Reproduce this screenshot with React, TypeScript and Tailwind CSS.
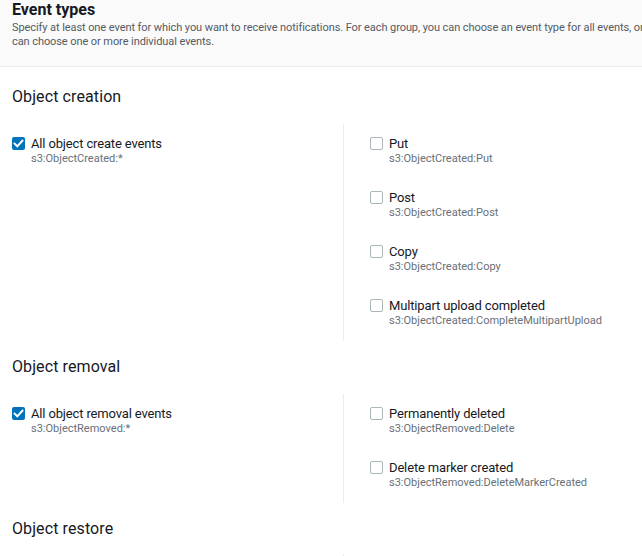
import React from 'react';

type EventOption = { label: string; code: string; checked?: boolean };

type Group = {
  title: string;
  all: EventOption;
  items: EventOption[];
};

const groups: Group[] = [
  {
    title: 'Object creation',
    all: { label: 'All object create events', code: 's3:ObjectCreated:*', checked: true },
    items: [
      { label: 'Put', code: 's3:ObjectCreated:Put' },
      { label: 'Post', code: 's3:ObjectCreated:Post' },
      { label: 'Copy', code: 's3:ObjectCreated:Copy' },
      { label: 'Multipart upload completed', code: 's3:ObjectCreated:CompleteMultipartUpload' },
    ],
  },
  {
    title: 'Object removal',
    all: { label: 'All object removal events', code: 's3:ObjectRemoved:*', checked: true },
    items: [
      { label: 'Permanently deleted', code: 's3:ObjectRemoved:Delete' },
      { label: 'Delete marker created', code: 's3:ObjectRemoved:DeleteMarkerCreated' },
    ],
  },
];

const Checkbox = ({ checked }: { checked?: boolean }) =>
  checked ? (
    <span className="mt-[1px] flex h-[13px] w-[13px] shrink-0 items-center justify-center rounded-[2px] bg-[#0073bb]">
      <svg viewBox="0 0 13 13" className="h-[13px] w-[13px]" fill="none">
        <path d="M2.6 6.6l2.7 2.7 5.1-5.6" stroke="#fff" strokeWidth={2} strokeLinecap="square" />
      </svg>
    </span>
  ) : (
    <span className="mt-[1px] h-[13px] w-[13px] shrink-0 rounded-[2px] border border-[#aab7b8] bg-white" />
  );

const EventRow = ({ option }: { option: EventOption }) => (
  <label className="flex gap-[6px]">
    <Checkbox checked={option.checked} />
    <div className="flex flex-col">
      <span className="text-[13px] leading-[16px] tracking-[-0.15px] text-[#16191f]">{option.label}</span>
      <span className="text-[11px] leading-[14px] text-[#687078]">{option.code}</span>
    </div>
  </label>
);

const EventGroup = ({ group }: { group: Group }) => (
  <section>
    <h3 className="mt-4 mb-[17px] text-[16px] leading-[20px] tracking-[0.1px] font-normal text-[#16191f]">{group.title}</h3>
    <div className="grid grid-cols-2">
      <div className="pt-3 pb-[13px]">
        <EventRow option={group.all} />
      </div>
      <div className="flex flex-col gap-6 border-l border-[#eaeded] pt-3 pb-[13px] pl-[26px]">
        {group.items.map((item) => (
          <EventRow key={item.code} option={item} />
        ))}
      </div>
    </div>
  </section>
);

export default function App() {
  return (
    <div className="h-[556px] w-[642px] overflow-hidden bg-white font-['Roboto',sans-serif]">
      <div className="w-[700px]">
        <header className="h-[67px] border-b border-[#eaeded] bg-[#fafafa] px-3">
          <h2 className="text-[16px] leading-[20px] font-bold text-[#16191f]">Event types</h2>
          <p className="whitespace-nowrap pt-[1px] text-[11px] leading-[14px] tracking-[-0.08px] text-[#545b64]">
            Specify at least one event for which you want to receive notifications. For each group, you can choose an event type for all events, or you
            <br />
            can choose one or more individual events.
          </p>
        </header>
        <div className="w-[686px] px-3 pt-1">
          {groups.map((group) => (
            <EventGroup key={group.title} group={group} />
          ))}
          <section>
            <h3 className="mt-4 mb-[15px] text-[16px] leading-[20px] tracking-[0.1px] font-normal text-[#16191f]">Object restore</h3>
            <div className="grid grid-cols-2">
              <div />
              <div className="h-10 border-l border-[#eaeded]" />
            </div>
          </section>
        </div>
      </div>
    </div>
  );
}
